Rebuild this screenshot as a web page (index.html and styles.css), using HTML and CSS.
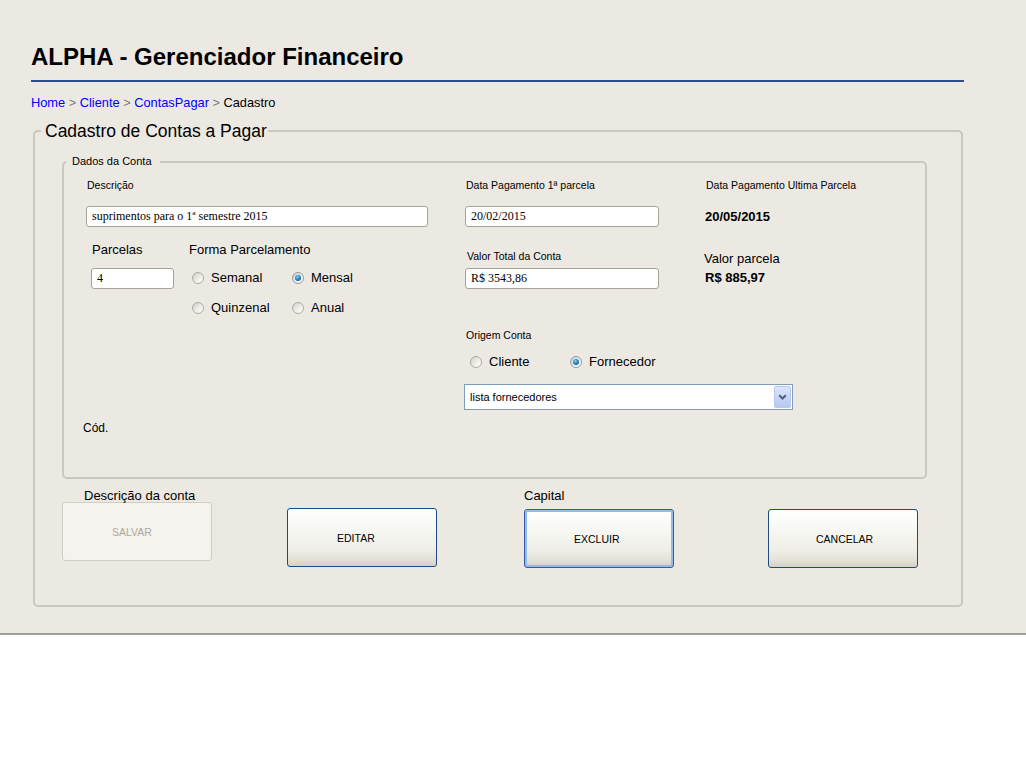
FILE: index.html
```html
<!DOCTYPE html>
<html lang="pt-BR">
<head>
<meta charset="utf-8">
<title>ALPHA - Gerenciador Financeiro</title>
<link rel="stylesheet" href="styles.css">
</head>
<body>
<div class="app">
  <div class="page">
    <h1 class="title">ALPHA - Gerenciador Financeiro</h1>
    <div class="rule"></div>
    <nav class="crumbs"><a class="crumb-link">Home</a> <span class="sep">&gt;</span> <a class="crumb-link">Cliente</a> <span class="sep">&gt;</span> <a class="crumb-link">ContasPagar</a> <span class="sep">&gt;</span> <span class="crumb-cur">Cadastro</span></nav>

    <fieldset class="group outer">
      <legend class="legend-outer">Cadastro de Contas a Pagar</legend>

      <fieldset class="group inner">
        <legend class="legend-inner">Dados da Conta</legend>
        <div class="form-cols">
          <div class="col-left">
            <div class="lbl-sm lbl-desc">Descrição</div>
            <input class="txt txt-desc" type="text" value="suprimentos para o 1ª semestre 2015">
            <div class="parc-row">
              <div class="parc-block">
                <div class="lbl-md lbl-parc">Parcelas</div>
                <input class="txt txt-parc" type="text" value="4">
              </div>
              <div class="forma-block">
                <div class="lbl-md">Forma Parcelamento</div>
                <div class="radio-grid">
                  <div class="radio"><span class="dot"></span>Semanal</div>
                  <div class="radio"><span class="dot on"></span>Mensal</div>
                  <div class="radio"><span class="dot"></span>Quinzenal</div>
                  <div class="radio"><span class="dot"></span>Anual</div>
                </div>
              </div>
            </div>
          </div>

          <div class="col-right">
            <div class="right-top">
              <div class="col-a">
                <div class="lbl-sm pl1">Data Pagamento 1ª parcela</div>
                <input class="txt txt-mid" type="text" value="20/02/2015">
                <div class="lbl-sm pl2 lbl-valor">Valor Total da Conta</div>
                <input class="txt txt-mid txt-valor" type="text" value="R$ 3543,86">
              </div>
              <div class="col-b">
                <div class="lbl-sm pl2">Data Pagamento Ultima Parcela</div>
                <div class="val val-date">20/05/2015</div>
                <div class="lbl-md lbl-vparc">Valor parcela</div>
                <div class="val val-parc">R$ 885,97</div>
              </div>
            </div>
            <div class="lbl-sm pl1 origem">Origem Conta</div>
            <div class="radio-row">
              <div class="radio"><span class="dot"></span>Cliente</div>
              <div class="radio"><span class="dot on"></span>Fornecedor</div>
            </div>
            <div class="select">
              <span class="select-text">lista fornecedores</span>
              <span class="select-arrow"><svg width="9" height="6" viewBox="0 0 9 6"><path d="M1.2 1.2 L4.5 4.5 L7.8 1.2" fill="none" stroke="#4B5F86" stroke-width="2"/></svg></span>
            </div>
          </div>
        </div>
        <div class="cod">Cód.</div>
      </fieldset>

      <div class="actions">
        <div class="act-col">
          <div class="act-lbl act-lbl-desc">Descrição da conta</div>
          <button class="btn btn-disabled" type="button">SALVAR</button>
        </div>
        <div class="act-col">
          <button class="btn btn-edit" type="button">EDITAR</button>
        </div>
        <div class="act-col">
          <div class="act-lbl">Capital</div>
          <button class="btn btn-focus" type="button">EXCLUIR</button>
        </div>
        <div class="act-col">
          <button class="btn btn-cancel" type="button">CANCELAR</button>
        </div>
      </div>
    </fieldset>
  </div>
</div>
</body>
</html>
```

FILE: styles.css
```css
html, body {
  margin: 0;
  padding: 0;
  background: #ffffff;
}

body {
  font-family: "Liberation Sans", Arial, sans-serif;
  color: #000;
}

.app {
  background: #ECE9E3;
  padding: 43px 0 26px 0;
  border-bottom: 2px solid #9F9E9B;
  margin-left: 0;
}

.app::after {
  content: "";
  display: block;
  height: 0;
}

.page {
  width: 933px;
  padding-left: 31px;
}

.title {
  margin: 0;
  font-size: 24px;
  line-height: 28px;
  font-weight: bold;
}

.rule {
  margin-top: 9px;
  height: 2px;
  background: #2F4C8E;
}

.crumbs {
  margin-top: 13px;
  font-size: 12.8px;
  line-height: 15px;
  height: 15px;
  white-space: nowrap;
}

.crumb-link {
  color: #0000FF;
  text-decoration: none;
}

.sep {
  color: #7A7A7A;
}

.crumb-cur {
  color: #000;
}

/* group boxes */
.group {
  border: 2px solid #CAC7BD;
  border-radius: 5px;
  margin: 0;
  box-sizing: border-box;
  min-width: 0;
}

.outer {
  margin: 11px 1px 0 2px;
  padding: 14px 0 37px 0;
}

.legend-outer {
  font-size: 17.5px;
  line-height: 20px;
  margin-left: 6px;
  padding: 0 1px 0 4px;
}

.inner {
  margin-left: 27px;
  width: 865px;
  padding: 11px 0 42px 0;
}

.legend-inner {
  font-size: 11px;
  line-height: 13px;
  margin-left: 2px;
  padding: 0 8px 0 6px;
}

.form-cols {
  display: flex;
}

.col-left {
  width: 401px;
  flex: none;
}

.col-right {
  flex: 1;
}

.lbl-sm {
  font-size: 10.5px;
  line-height: 13px;
  height: 13px;
  white-space: nowrap;
}

.lbl-md {
  font-size: 13px;
  line-height: 15px;
  height: 15px;
  white-space: nowrap;
}

.pl1 { padding-left: 1px; }
.pl2 { padding-left: 2px; }

.lbl-desc {
  padding-left: 23px;
}

.txt {
  display: block;
  box-sizing: border-box;
  height: 21px;
  margin: 0;
  padding: 0 5px;
  border: 1px solid #A7A396;
  border-radius: 3px;
  background: #fff;
  color: #000;
  font-family: "Liberation Serif", "Times New Roman", serif;
  font-size: 12px;
  outline: none;
}

.txt-desc {
  margin-top: 14px;
  margin-left: 22px;
  width: 342px;
}

.parc-row {
  display: flex;
  margin-top: 15px;
}

.parc-block {
  margin-left: 27px;
  width: 98px;
  flex: none;
}

.lbl-parc {
  padding-left: 1px;
}

.txt-parc {
  margin-top: 11px;
  width: 83px;
}

.radio-grid {
  display: grid;
  grid-template-columns: 100px 100px;
  row-gap: 15px;
  margin-top: 13px;
  padding-left: 3px;
}

.radio {
  display: flex;
  align-items: center;
  font-size: 13px;
  line-height: 15px;
  height: 15px;
  white-space: nowrap;
}

.dot {
  flex: none;
  width: 12px;
  height: 12px;
  box-sizing: border-box;
  border-radius: 50%;
  border: 1px solid #AEACA3;
  background: linear-gradient(135deg, #CFCDC5 0%, #ECEBE6 50%, #FFFFFF 100%);
  margin-right: 7px;
  display: flex;
  align-items: center;
  justify-content: center;
}

.dot.on {
  border-color: #8F9DA8;
}

.dot.on::after {
  content: "";
  width: 6px;
  height: 6px;
  border-radius: 50%;
  background: radial-gradient(circle at 40% 35%, #8ED0F4 0%, #2A86C4 45%, #0E4C86 100%);
}

/* right column */
.right-top {
  display: flex;
}

.col-a {
  width: 239px;
  flex: none;
}

.txt-mid {
  margin-top: 14px;
  width: 194px;
}

.lbl-valor {
  margin-top: 23px;
}

.txt-valor {
  margin-top: 5px;
}

.col-b {
  flex: 1;
}

.val {
  font-size: 13px;
  line-height: 15px;
  height: 15px;
  font-weight: bold;
  padding-left: 1px;
  white-space: nowrap;
}

.val-date {
  margin-top: 17px;
}

.lbl-vparc {
  margin-top: 27px;
}

.val-parc {
  margin-top: 4px;
}

.origem {
  margin-top: 40px;
}

.radio-row {
  display: grid;
  grid-template-columns: 100px 100px;
  margin-top: 12px;
  padding-left: 5px;
}

.select {
  margin-top: 15px;
  margin-left: -1px;
  width: 329px;
  height: 26px;
  box-sizing: border-box;
  border: 1px solid #7F9DB9;
  background: #fff;
  display: flex;
  align-items: center;
  padding-left: 5px;
  font-size: 11px;
}

.select-text {
  flex: 1;
  white-space: nowrap;
}

.select-arrow {
  flex: none;
  width: 17px;
  height: 22px;
  box-sizing: border-box;
  margin-right: 1px;
  border: 1px solid #B9C8EE;
  border-radius: 2px;
  background: linear-gradient(180deg, #DCE5FB 0%, #C6D3F6 55%, #B8C8F2 100%);
  display: flex;
  align-items: center;
  justify-content: center;
}

.cod {
  margin-top: 11px;
  padding-left: 19px;
  font-size: 12px;
  line-height: 14px;
  height: 14px;
}

/* actions */
.actions {
  display: grid;
  grid-template-columns: 225px 237px 244px 150px;
  align-items: start;
  margin-top: 10px;
  margin-left: 27px;
}

.act-lbl {
  font-size: 13px;
  line-height: 13px;
  height: 13px;
  white-space: nowrap;
}

.act-lbl-desc {
  padding-left: 22px;
}

.btn {
  display: flex;
  align-items: center;
  box-sizing: border-box;
  width: 150px;
  height: 59px;
  margin: 0;
  padding: 0 0 0 49px;
  font-family: "Liberation Sans", Arial, sans-serif;
  font-size: 10.5px;
  color: #000;
  border: 1px solid #1D4C85;
  border-radius: 3px;
  background: linear-gradient(180deg, #FFFFFF 0%, #F7F7F3 35%, #EFEEE8 70%, #E4E1D8 88%, #D6D1C5 100%);
  cursor: default;
}

.btn-disabled {
  border-color: #D0CEC2;
  background: #F4F3EE;
  color: #ACA899;
}

.btn-edit {
  margin-top: 19px;
}

.btn-focus {
  margin-top: 7px;
  border-color: #2F5EA3;
  box-shadow: inset 0 0 0 2px #98B7EA;
}

.btn-cancel {
  margin-top: 20px;
  padding-left: 47px;
}
```
